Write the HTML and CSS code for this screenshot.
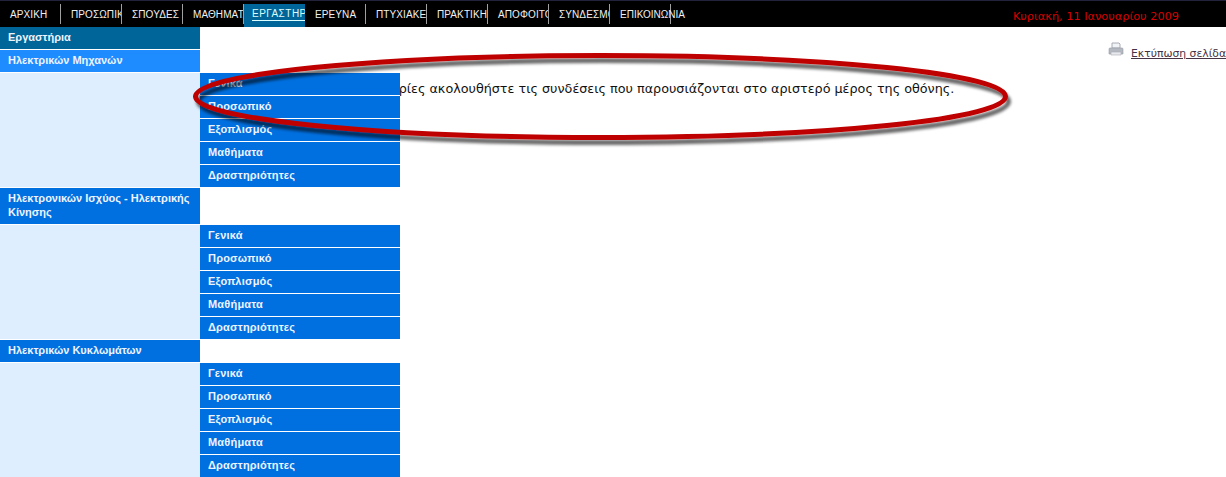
FILE: index.html
```html
<!DOCTYPE html>
<html lang="el">
<head>
<meta charset="utf-8">
<title>Εργαστήρια</title>
<link rel="stylesheet" href="styles.css">
</head>
<body>
<header class="topbar">
  <nav class="menu">
    <a class="item">ΑΡΧΙΚΗ</a>
    <a class="item">ΠΡΟΣΩΠΙΚΟ</a>
    <a class="item">ΣΠΟΥΔΕΣ</a>
    <a class="item">ΜΑΘΗΜΑΤΑ</a>
    <a class="item active"><span>ΕΡΓΑΣΤΗΡΙΑ</span></a>
    <a class="item">ΕΡΕΥΝΑ</a>
    <a class="item">ΠΤΥΧΙΑΚΕΣ</a>
    <a class="item">ΠΡΑΚΤΙΚΗ</a>
    <a class="item">ΑΠΟΦΟΙΤΟΙ</a>
    <a class="item">ΣΥΝΔΕΣΜΟΙ</a>
    <a class="item wide">ΕΠΙΚΟΙΝΩΝΙΑ</a>
  </nav>
  <div class="date">Κυριακή, 11 Ιανουαρίου 2009</div>
</header>
<div class="page">
  <aside class="sidebar">
    <div class="title">Εργαστήρια</div>
    <div class="head current">Ηλεκτρικών Μηχανών</div>
    <ul class="subs">
      <li>Γενικά</li><li>Προσωπικό</li><li>Εξοπλισμός</li><li>Μαθήματα</li><li>Δραστηριότητες</li>
    </ul>
    <div class="head">Ηλεκτρονικών Ισχύος - Ηλεκτρικής Κίνησης</div>
    <ul class="subs">
      <li>Γενικά</li><li>Προσωπικό</li><li>Εξοπλισμός</li><li>Μαθήματα</li><li>Δραστηριότητες</li>
    </ul>
    <div class="head">Ηλεκτρικών Κυκλωμάτων</div>
    <ul class="subs">
      <li>Γενικά</li><li>Προσωπικό</li><li>Εξοπλισμός</li><li>Μαθήματα</li><li>Δραστηριότητες</li>
    </ul>
  </aside>
  <main class="content">
    <div class="print">
      <svg class="printer" width="16" height="15" viewBox="0 0 16 15">
        <path d="M4 1h7l1 1v4H4z" fill="#f2f3f6" stroke="#a8acb5"/>
        <path d="M1 7q0-1 1-1h12q1 0 1 1v5H1z" fill="#b4b8c0" stroke="#989ca6" stroke-width=".6"/>
        <path d="M3 10h10v3H3z" fill="#e8e9ed" stroke="#a8acb5" stroke-width=".6"/>
      </svg>
      <a class="print-link">Εκτύπωση σελίδας</a>
    </div>
    <p class="intro">Για να δείτε τις κατηγορίες ακολουθήστε τις συνδέσεις που παρουσιάζονται στο αριστερό μέρος της οθόνης.</p>
  </main>
</div>
<svg class="oval" width="1226" height="477" viewBox="0 0 1226 477">
  <defs>
    <filter id="sh" x="-5%" y="-30%" width="110%" height="160%">
      <feGaussianBlur in="SourceAlpha" stdDeviation="1.8"/>
      <feOffset dx="3" dy="5"/>
      <feComponentTransfer><feFuncA type="linear" slope=".6"/></feComponentTransfer>
      <feMerge><feMergeNode/><feMergeNode in="SourceGraphic"/></feMerge>
    </filter>
  </defs>
  <ellipse cx="600.5" cy="96.5" rx="405" ry="41" fill="none" stroke="#bf0000" stroke-width="5" filter="url(#sh)"/>
</svg>
</body>
</html>
```
FILE: styles.css
```css
* { box-sizing: border-box; }
html, body { margin: 0; padding: 0; background: #fff; }
body { width: 1226px; height: 477px; overflow: hidden; position: relative; font-family: "DejaVu Sans", Verdana, sans-serif; }

.topbar { height: 27px; background: #000; border-top: 1px solid #22223a; display: flex; justify-content: space-between; }
.menu { display: flex; padding-top: 3px; }
.item { display: block; width: 61px; height: 20px; overflow: hidden; white-space: nowrap; color: #f0f0f0; font: 10px/21px "Liberation Sans", Arial, sans-serif; letter-spacing: .1px; padding-left: 10px; border-right: 1px solid #a0a0a0; }
.item.active { background: #006699; border-right: 0; color: #dff; height: 23px; padding-left: 8px; letter-spacing: .5px; }
.item.active span { border-bottom: 1px solid #dff; display: block; height: 17px; line-height: 19px; width: 60px; }
.item.wide { overflow: visible; letter-spacing: 0; }
.date { color: #d80000; font: 11.3px/26px "DejaVu Sans", Verdana, sans-serif; margin-right: 47px; padding-top: 3px; }

.page { position: relative; }
.sidebar { width: 200px; position: relative; z-index: 1; color: #eef4ff; font: bold 11px/14px "Liberation Sans", Arial, sans-serif; }
.title, .head { padding: 3px 8px 5px; margin-bottom: 1px; background: #0070e0; }
.title { background: #006699; height: 22px; }
.head { min-height: 22px; }
.head.current { background: #1e8cff; }
.subs { list-style: none; margin: 0 0 1px; padding: 0; background: #deeeff; }
.subs li { width: 200px; height: 23px; margin-left: 200px; padding: 3px 8px 0; background: #0070e0; border-bottom: 1px solid #fff; letter-spacing: .2px; position: relative; }
.subs li:last-child { height: 22px; border-bottom: 0; }

.content { position: absolute; left: 0; top: 0; width: 1226px; }
.print { position: absolute; left: 1108px; top: 15px; display: flex; gap: 7px; white-space: nowrap; }
.print-link { color: #443344; font: 10.8px/14px "DejaVu Sans", Verdana, sans-serif; text-decoration: underline; margin-top: 5px; }
.printer { display: block; }
.intro { position: absolute; left: 247px; top: 54px; margin: 0; white-space: nowrap; color: #111; font: 12.75px/16px "DejaVu Sans", Verdana, sans-serif; }

.oval { position: absolute; left: 0; top: 0; z-index: 2; pointer-events: none; }
```
